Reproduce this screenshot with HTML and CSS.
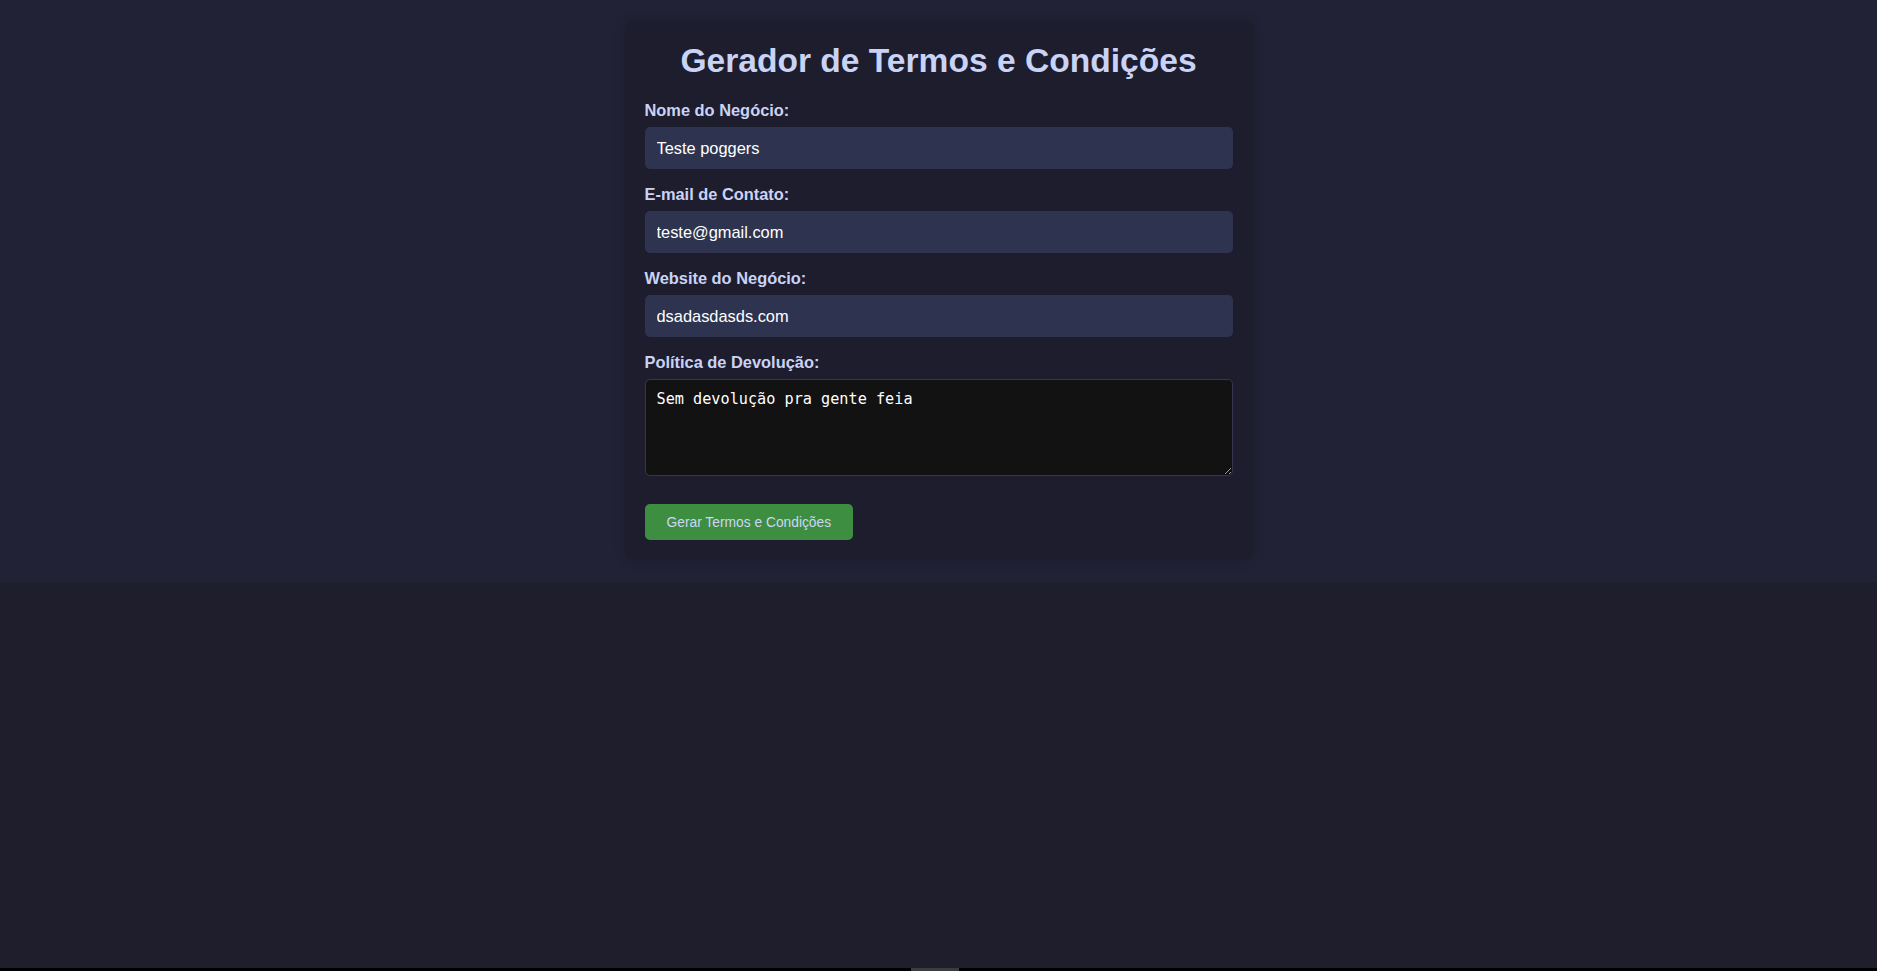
FILE: index.html
```html
<!DOCTYPE html>
<html lang="pt-BR">
<head>
<meta charset="utf-8">
<title>Gerador de Termos e Condições</title>
<link rel="stylesheet" href="styles.css">
</head>
<body>
<div class="top">
  <div class="card">
    <h1 class="title">Gerador de Termos e Condições</h1>
    <form class="form">
      <label class="label" for="nome">Nome do Negócio:</label>
      <input class="field" id="nome" type="text" value="Teste poggers">
      <label class="label" for="email">E-mail de Contato:</label>
      <input class="field" id="email" type="text" value="teste@gmail.com">
      <label class="label" for="site">Website do Negócio:</label>
      <input class="field" id="site" type="text" value="dsadasdasds.com">
      <label class="label" for="pol">Política de Devolução:</label>
      <textarea class="area" id="pol">Sem devolução pra gente feia</textarea>
      <div class="actions"><button class="btn" type="button">Gerar Termos e Condições</button></div>
    </form>
  </div>
</div>
<div class="hbar"><div class="thumb"></div></div>
</body>
</html>
```
FILE: styles.css
```css
html, body {
  margin: 0;
  padding: 0;
  height: 100%;
  background: #1e1e2d;
  font-family: "Liberation Sans", Arial, sans-serif;
}
.top {
  background: #212235;
  padding: 21px 0 22px;
}
.card {
  width: 588px;
  margin: 0 auto;
  padding: 20px;
  background: #1e1d2d;
  border-radius: 10px;
  box-shadow: 0 0 12px rgba(0, 0, 0, 0.22);
}
.title {
  margin: 0 0 20px;
  text-align: center;
  font-size: 33.6px;
  line-height: 40px;
  font-weight: bold;
  color: #c9d3f6;
}
.form {
  display: flex;
  flex-direction: column;
}
.label {
  display: block;
  font-size: 16.4px;
  line-height: 18px;
  font-weight: bold;
  color: #c9d3f6;
  margin-bottom: 8px;
}
.field {
  box-sizing: border-box;
  width: 100%;
  height: 42px;
  margin: 0 0 16px;
  padding: 0 12px;
  border: none;
  border-radius: 5px;
  background: #2e3450;
  color: #ffffff;
  font-family: "Liberation Sans", Arial, sans-serif;
  font-size: 16.4px;
  outline: none;
}
.area {
  box-sizing: border-box;
  width: 100%;
  height: 97px;
  margin: 0;
  padding: 10px 11px;
  border: 1px solid #363650;
  border-radius: 5px;
  background: #121212;
  color: #ffffff;
  font-family: "DejaVu Sans Mono", "Liberation Mono", monospace;
  font-size: 15.2px;
  resize: vertical;
  outline: none;
}
.actions {
  margin-top: 28px;
  display: flex;
}
.btn {
  height: 36px;
  padding: 0 22px;
  border: none;
  border-radius: 5px;
  background: #3e8e41;
  color: #cdd6f4;
  font-family: "Liberation Sans", Arial, sans-serif;
  font-size: 13.8px;
  cursor: pointer;
}
.hbar {
  position: fixed;
  left: 0;
  right: 0;
  bottom: 0;
  height: 3px;
  background: #000000;
}
.thumb {
  position: absolute;
  left: 911px;
  width: 48px;
  top: 0;
  bottom: 0;
  background: #3c3c3c;
}
```
